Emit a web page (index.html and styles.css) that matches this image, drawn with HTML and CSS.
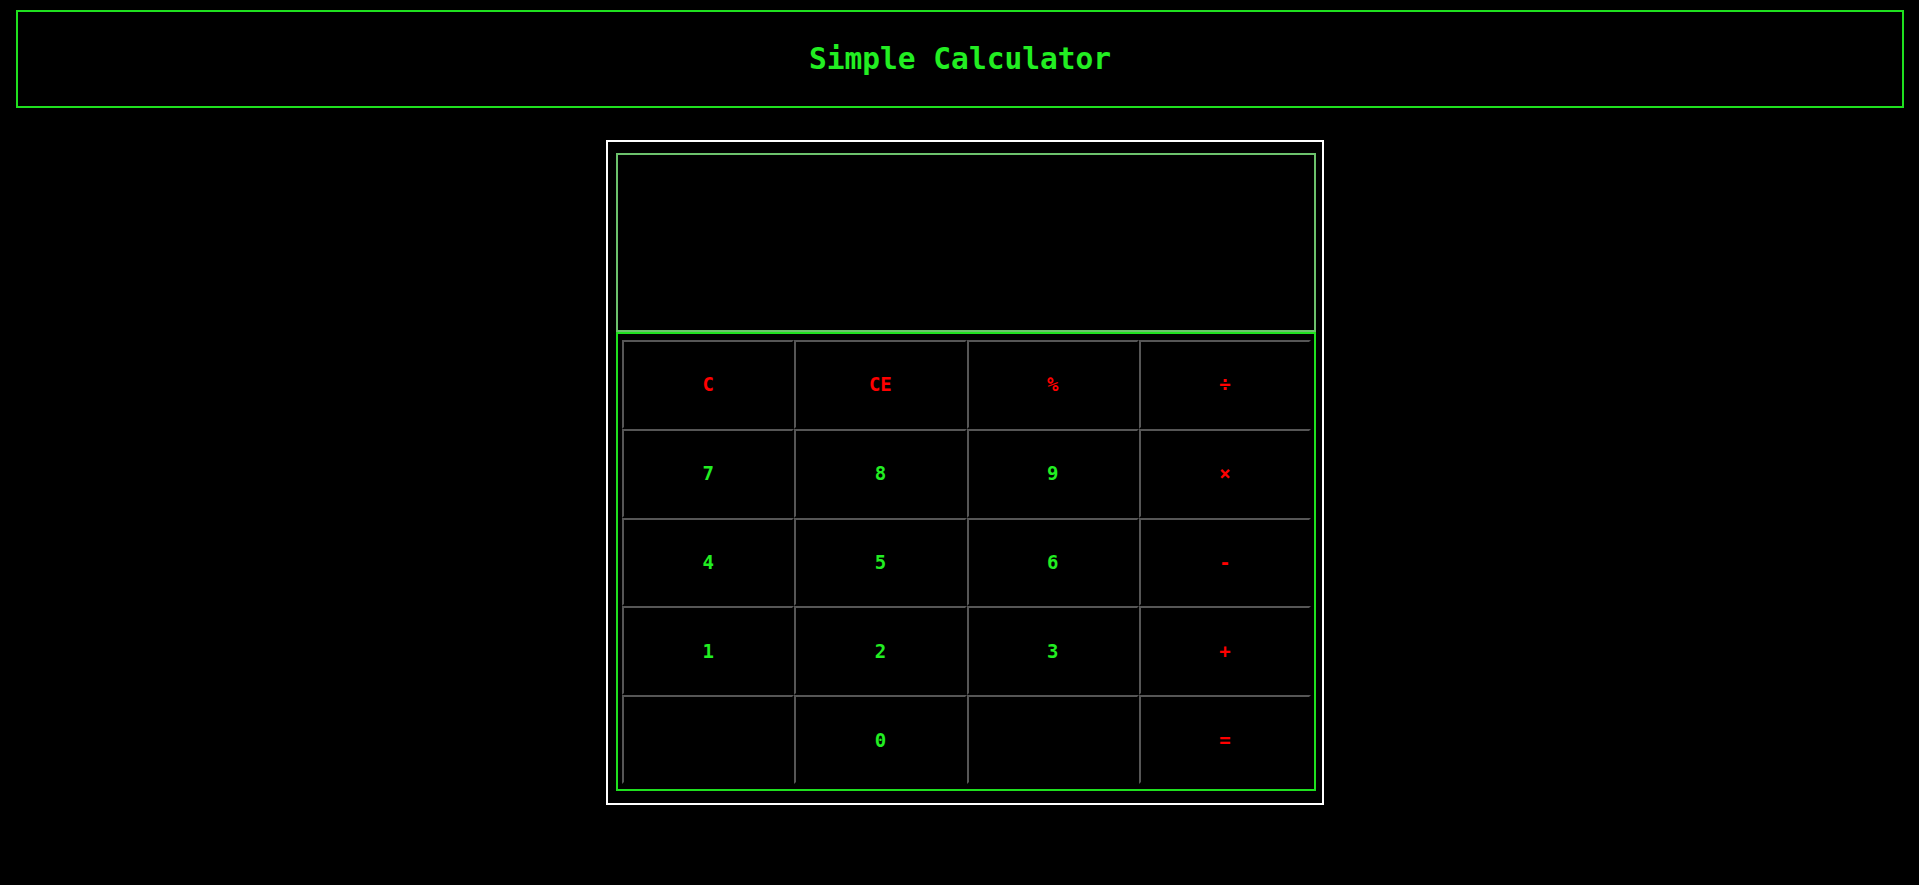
FILE: index.html
```html
<!DOCTYPE html>
<html>
<head>
<meta charset="utf-8">
<title>Simple Calculator</title>
<link rel="stylesheet" href="styles.css">
</head>
<body>
<header class="title-bar"><h1 class="title">Simple Calculator</h1></header>
<main class="stage">
  <div class="calc">
    <div class="display"></div>
    <div class="keypad">
      <button class="key op">C</button>
      <button class="key op">CE</button>
      <button class="key op">%</button>
      <button class="key op">÷</button>
      <button class="key num">7</button>
      <button class="key num">8</button>
      <button class="key num">9</button>
      <button class="key op">×</button>
      <button class="key num">4</button>
      <button class="key num">5</button>
      <button class="key num">6</button>
      <button class="key op">-</button>
      <button class="key num">1</button>
      <button class="key num">2</button>
      <button class="key num">3</button>
      <button class="key op">+</button>
      <button class="key num"></button>
      <button class="key num">0</button>
      <button class="key num"></button>
      <button class="key op">=</button>
    </div>
  </div>
</main>
</body>
</html>
```
FILE: styles.css
```css
html, body {
  background: #000;
}
body {
  margin: 8px;
  font-family: "DejaVu Sans Mono", monospace;
}
.title-bar {
  margin: 2px 7px 0 8px;
  height: 92px;
  padding-top: 2px;
  border: 2px solid #1fe01f;
  display: flex;
  align-items: center;
  justify-content: center;
}
.title {
  margin: 0;
  font-size: 29.5px;
  font-weight: bold;
  color: #22ee22;
  line-height: 1;
}
.stage {
  display: flex;
  justify-content: center;
  padding-left: 11px;
  margin-top: 32px;
}
.calc {
  width: 718px;
  border: 2px solid #fff;
  padding: 11px 6px 12px 8px;
  box-sizing: border-box;
}
.display {
  width: 696px;
  height: 175px;
  border: 2px solid #6cc26c;
}
.keypad {
  width: 700px;
  height: 459px;
  border: 2px solid #1fe01f;
  padding: 6px 3px 5px 4px;
  box-sizing: border-box;
  display: grid;
  grid-template-columns: repeat(4, 1fr);
  grid-template-rows: repeat(5, 1fr);
}
.key {
  background: #000;
  border-style: solid;
  border-width: 2px;
  border-color: #565656 #000 #000 #565656;
  font-family: "DejaVu Sans Mono", monospace;
  font-weight: bold;
  font-size: 19px;
  padding: 0;
  margin: 0;
}
.num {
  color: #22ee22;
}
.op {
  color: #ff0000;
}
```
